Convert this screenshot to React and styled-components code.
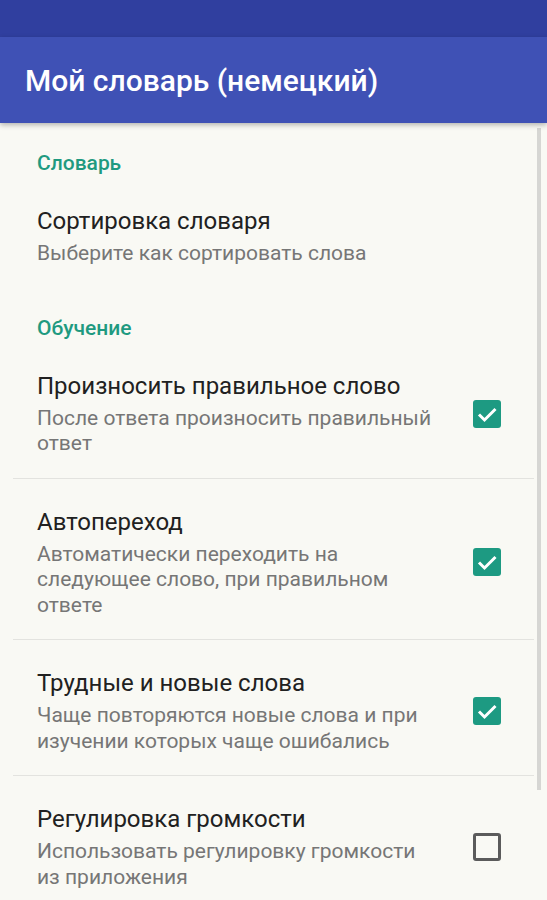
import React from 'react'
import styled, { createGlobalStyle } from 'styled-components'

const GlobalStyle = createGlobalStyle`
  html, body {
    margin: 0;
    padding: 0;
    background: #f9f9f4;
  }
  body {
    font-family: Roboto, "Noto Sans", "Liberation Sans", sans-serif;
  }
`

const sections = [
  {
    title: 'Словарь',
    items: [
      { title: 'Сортировка словаря', summary: 'Выберите как сортировать слова' },
    ],
  },
  {
    title: 'Обучение',
    items: [
      { title: 'Произносить правильное слово', summary: 'После ответа произносить правильный ответ', checked: true },
      { title: 'Автопереход', summary: 'Автоматически переходить на следующее слово, при правильном ответе', checked: true },
      { title: 'Трудные и новые слова', summary: 'Чаще повторяются новые слова и при изучении которых чаще ошибались', checked: true },
      { title: 'Регулировка громкости', summary: 'Использовать регулировку громкости из приложения', checked: false },
    ],
  },
]

function CheckBox({ checked }) {
  return (
    <Box checked={checked}>
      {checked && (
        <svg width="28" height="28" viewBox="0 0 28 28">
          <path d="M6 14.5l5.5 5.5L22.5 9" fill="none" stroke="#fff" strokeWidth="3" />
        </svg>
      )}
    </Box>
  )
}

function App() {
  return (
    <Screen>
      <GlobalStyle />
      <StatusBar />
      <Toolbar>
        <Title>Мой словарь (немецкий)</Title>
      </Toolbar>
      <Content>
        {sections.map((section, si) => (
          <Section key={si}>
            <Category>{section.title}</Category>
            {section.items.map((item, i) => (
              <Row key={i} divided={item.checked !== undefined && i < section.items.length - 1}>
                <Texts>
                  <RowTitle>{item.title}</RowTitle>
                  <Summary>{item.summary}</Summary>
                </Texts>
                {item.checked !== undefined && (
                  <Widget>
                    <CheckBox checked={item.checked} />
                  </Widget>
                )}
              </Row>
            ))}
          </Section>
        ))}
        <Scrollbar />
      </Content>
    </Screen>
  )
}

export default App

const Screen = styled.div`
  width: 547px;
  height: 900px;
  overflow: hidden;
  display: flex;
  flex-direction: column;
  background: #f9f9f4;
`

const StatusBar = styled.div`
  height: 37px;
  flex-shrink: 0;
  background: #303f9f;
`

const Toolbar = styled.div`
  height: 86px;
  flex-shrink: 0;
  display: flex;
  align-items: center;
  padding: 0 25px;
  background: #3f51b5;
  box-shadow: 0 2px 5px rgba(0, 0, 0, 0.28);
  position: relative;
  z-index: 1;
`

const Title = styled.div`
  color: #fff;
  font-size: 30px;
  font-weight: 500;
`

const Content = styled.div`
  position: relative;
  flex: 1;
  padding: 0 13px;
`

const Section = styled.div`
  padding-top: 28px;
`

const Category = styled.div`
  padding-left: 24px;
  height: 24px;
  line-height: 24px;
  margin-bottom: 3px;
  font-size: 21px;
  font-weight: 500;
  color: #1f9a80;
`

const Row = styled.div`
  display: flex;
  align-items: center;
  padding: 28px 33px 21px 24px;
  border-bottom: ${p => (p.divided ? '1px solid #e3e3df' : 'none')};
`

const Texts = styled.div`
  flex: 1;
  min-width: 0;
  max-width: 405px;
`

const RowTitle = styled.div`
  font-size: 24px;
  line-height: 30px;
  color: #212121;
`

const Summary = styled.div`
  margin-top: 5px;
  font-size: 21px;
  line-height: 25.5px;
  color: #767676;
`

const Widget = styled.div`
  margin-left: auto;
  padding-left: 20px;
  flex-shrink: 0;
`

const Box = styled.div`
  width: 28px;
  height: 28px;
  box-sizing: border-box;
  border-radius: 3px;
  display: flex;
  align-items: center;
  justify-content: center;
  background: ${p => (p.checked ? '#1d9a82' : 'transparent')};
  border: ${p => (p.checked ? 'none' : '3px solid #5b5b5b')};
`

const Scrollbar = styled.div`
  position: absolute;
  top: 5px;
  right: 6px;
  width: 4px;
  height: 662px;
  background: #d6d6d3;
`
